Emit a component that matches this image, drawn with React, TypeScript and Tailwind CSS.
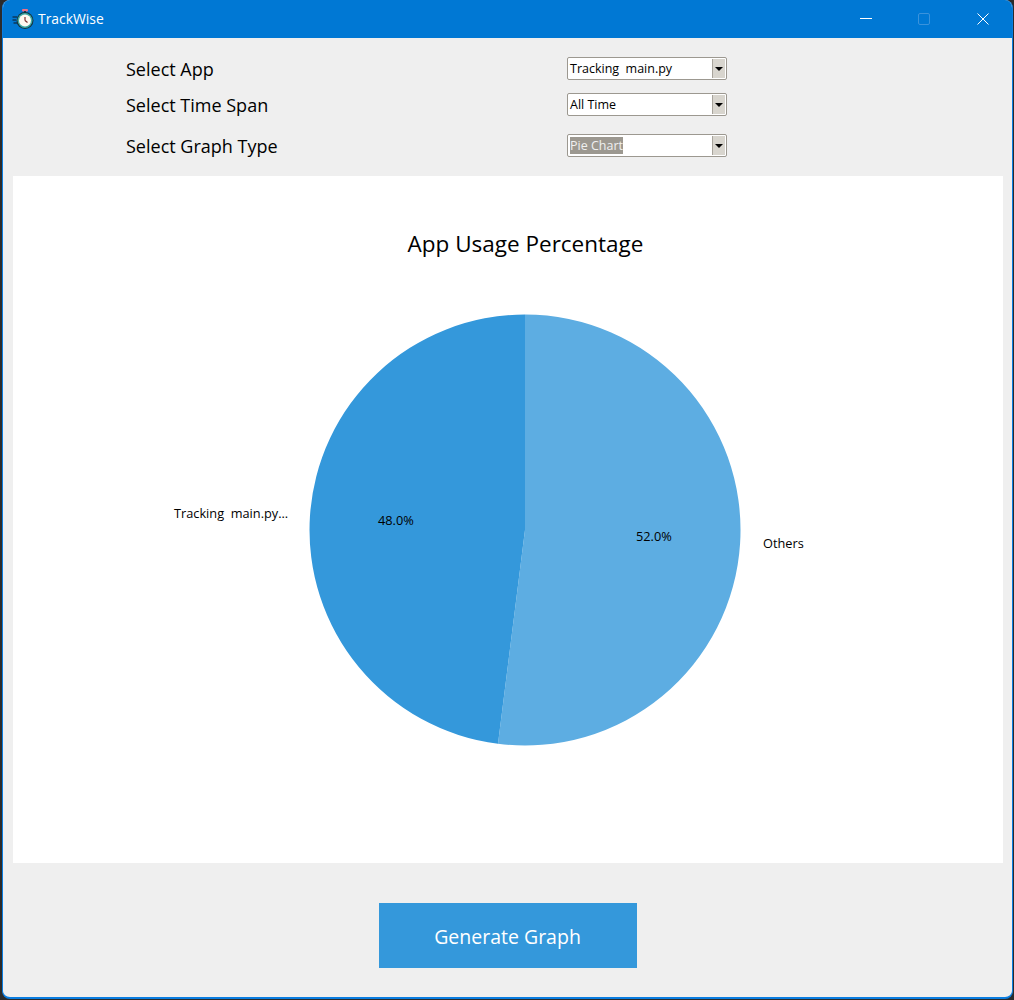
const font = "font-['Open_Sans','Liberation_Sans',sans-serif]"

const StopwatchIcon = () => (
  <svg width="24" height="24" viewBox="0 0 24 24" className="shrink-0">
    <rect x="10" y="2" width="6" height="2.5" rx="1" fill="#ef6f86" />
    <rect x="12" y="4" width="2" height="2" fill="#1f3b45" />
    <circle cx="13" cy="13.5" r="8.5" fill="#14323c" />
    <circle cx="13" cy="13.5" r="7.5" fill="#3fa9a5" />
    <circle cx="13" cy="13.5" r="6" fill="#fff8f0" />
    <path d="M13 13.5 L13 10 M13 13.5 L15.5 15.5" stroke="#7a2e2e" strokeWidth="1.2" fill="none" />
    <path d="M0.5 10 H5 M0.5 13 H4 M1.5 16 H5" stroke="#101820" strokeWidth="1.2" fill="none" />
  </svg>
)

const WindowButtons = () => (
  <div className="flex items-center">
    <div className="w-[58px] h-[38px] flex items-center justify-center">
      <svg width="12" height="12" viewBox="0 0 12 12">
        <path d="M0 5.5 H12" stroke="#fff" strokeWidth="1" />
      </svg>
    </div>
    <div className="w-[58px] h-[38px] flex items-center justify-center">
      <div className="w-3 h-3 border border-[#3a93dc] rounded-[2px]" />
    </div>
    <div className="w-[60px] h-[38px] flex items-center justify-center">
      <svg width="12" height="12" viewBox="0 0 12 12">
        <path d="M0.5 0.5 L11.5 11.5 M11.5 0.5 L0.5 11.5" stroke="#fff" strokeWidth="1" />
      </svg>
    </div>
  </div>
)

const Combo = ({ value, selected }: { value: string; selected?: boolean }) => (
  <div className="w-[160px] h-[23px] flex border border-[#9c9890] rounded-[2px] bg-white p-px">
    <div className="flex-1 flex items-center pl-px pt-[2px] text-[12.5px] text-black leading-none whitespace-pre">
      {selected ? (
        <span className="bg-[#9c9890] text-[#f0f0f0] h-[17px] -mt-[2px] pt-[2px] flex items-center">{value}</span>
      ) : (
        value
      )}
    </div>
    <div className="w-[13px] bg-[#d8d5ce] border-l border-[#a8a49c] flex items-center justify-center">
      <div className="w-0 h-0 border-l-4 border-r-4 border-t-4 border-l-transparent border-r-transparent border-t-black" />
    </div>
  </div>
)

const Row = ({ label, value, selected, className }: { label: string; value: string; selected?: boolean; className: string }) => (
  <div className={`flex items-center h-[23px] ${className}`}>
    <div className="w-[441px] text-[18px] leading-none text-black">{label}</div>
    <Combo value={value} selected={selected} />
  </div>
)

const PieChart = () => (
  <svg width="434" height="434" viewBox="0 0 434 434" className="absolute left-[295px] top-[136.5px]">
    <path d="M217 217 L217 1.5 A215.5 215.5 0 1 1 190 430.8 Z" fill="#5dade2" />
    <path d="M217 217 L190 430.8 A215.5 215.5 0 0 1 217 1.5 Z" fill="#3498db" />
  </svg>
)

export default function App() {
  return (
    <div className={`w-[1014px] h-[1000px] bg-[#2b2b2b] pl-[2px] pr-px pb-px ${font}`}>
      <div className="h-full flex flex-col bg-[#efefef] border-x border-b-[2px] border-x-[#0a7de0] border-b-[#0a7de0] rounded-[8px] overflow-hidden">
        <div className="h-[38px] -mx-px shrink-0 bg-[#0078d4] flex items-center justify-between pl-[10px]">
          <div className="flex items-center gap-[2px]">
            <StopwatchIcon />
            <span className="text-[13.9px] text-white">TrackWise</span>
          </div>
          <WindowButtons />
        </div>

        <div className="pl-[123px] pt-[19px] shrink-0">
          <Row label="Select App" value="Tracking  main.py" className="" />
          <Row label="Select Time Span" value="All Time" className="mt-[13px]" />
          <Row label="Select Graph Type" value="Pie Chart" selected className="mt-[18px]" />
        </div>

        <div className="relative mt-[19px] ml-[10px] mr-[9px] h-[687px] shrink-0 bg-white text-[12.75px] text-black">
          <div className="absolute inset-x-0 top-[54px] text-center text-[22.5px] leading-[28px] pl-[35px]">
            App Usage Percentage
          </div>
          <PieChart />
          <span className="absolute left-[161px] top-[328px] whitespace-pre">Tracking  main.py...</span>
          <span className="absolute left-[365px] top-[335px]">48.0%</span>
          <span className="absolute left-[623px] top-[351px]">52.0%</span>
          <span className="absolute left-[750px] top-[358px]">Others</span>
        </div>

        <div className="flex justify-center pt-[40px]">
          <button className="w-[258px] h-[65px] pt-[2px] bg-[#3498db] text-white text-[19.5px]">Generate Graph</button>
        </div>
      </div>
    </div>
  )
}
